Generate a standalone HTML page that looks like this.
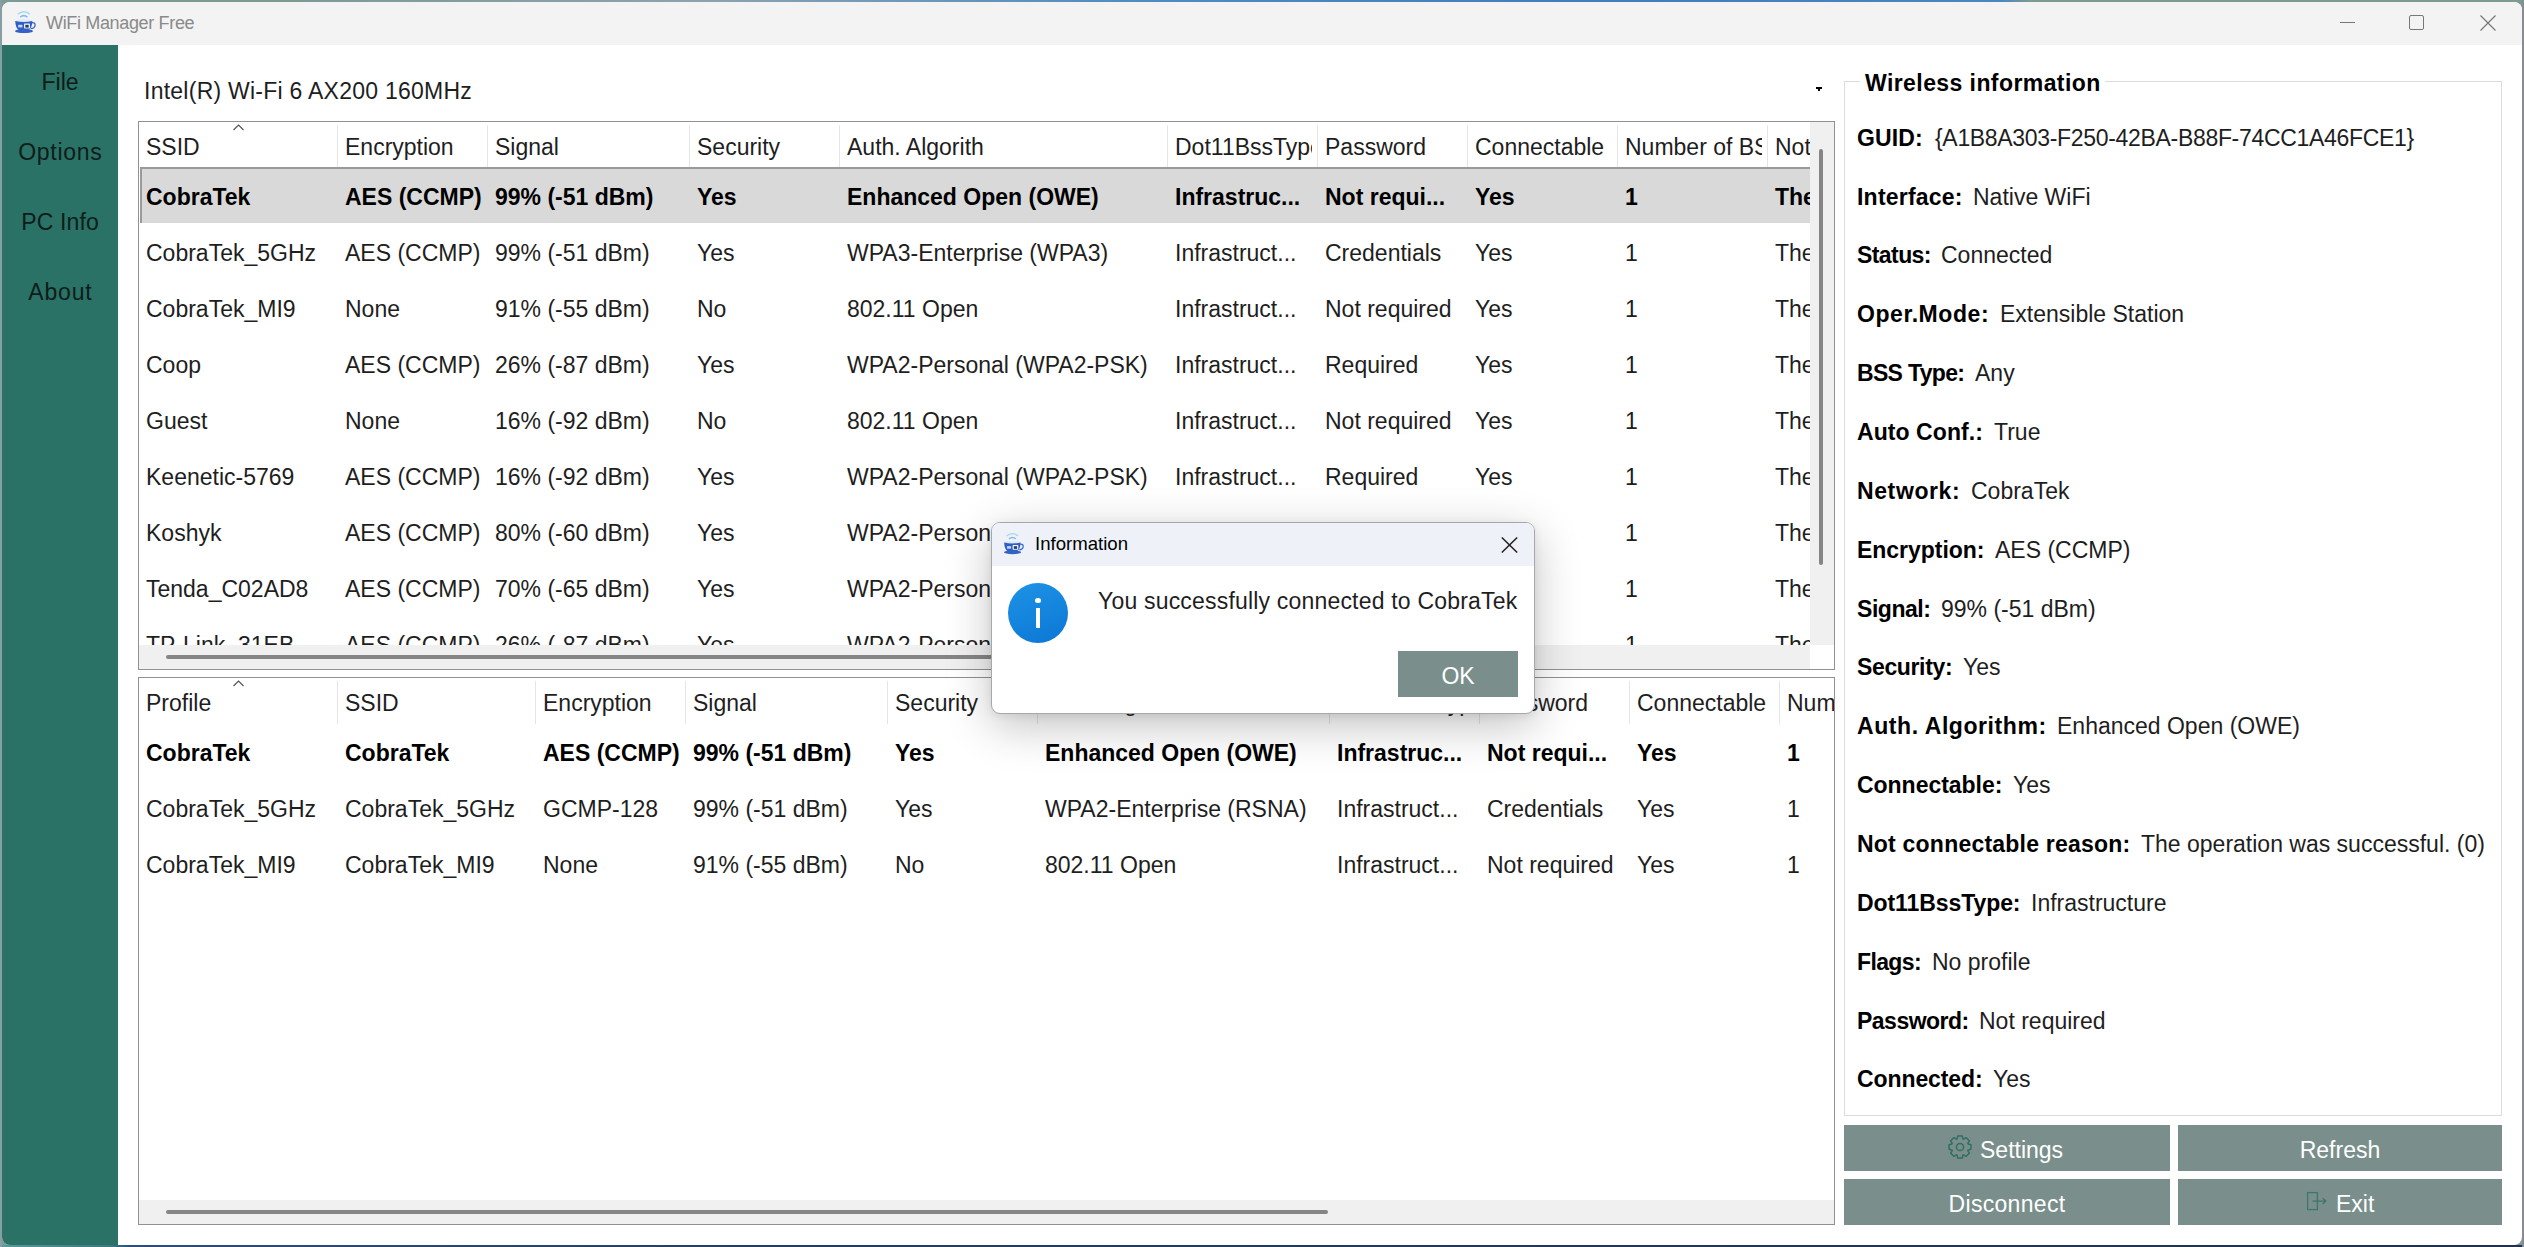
<!DOCTYPE html><html><head><meta charset="utf-8"><style>
*{margin:0;padding:0;box-sizing:border-box}
html,body{width:2524px;height:1247px;overflow:hidden;background:#7d9a95;font-family:"Liberation Sans",sans-serif;color:#000}
.abs{position:absolute}
.t{position:absolute;white-space:nowrap;font-size:23px;line-height:23px;color:#1e1e1e}
.b{font-weight:bold;color:#000}
.clip{position:absolute;overflow:hidden}
.btn{position:absolute;background:#7a8f8b;color:#fff}
</style></head><body>
<div class="abs" style="left:0;top:0;width:2524px;height:3px;background:linear-gradient(90deg,#7d9a95 0,#7d9a95 300px,#8da2b0 700px,#4f8cc0 1130px,#3f7cc0 1600px,#4a86c0 2000px,#7d9a95 2030px,#7d9a95 100%)"></div>
<div class="abs" style="left:0;top:1245px;width:2524px;height:2px;background:linear-gradient(90deg,#5a9a98 0,#3a7a80 110px,#2c4e7a 130px,#263c60 800px,#22304e 100%)"></div>
<div class="abs" style="left:2522px;top:0;width:2px;height:1247px;background:#878c92"></div>
<div class="abs" style="left:0;top:0;width:2px;height:1247px;background:#879ea3"></div>
<div class="abs" style="left:2px;top:2px;width:2520px;height:1243px;background:#fff;border-radius:8px"></div>
<div class="abs" style="left:2px;top:2px;width:2520px;height:43px;background:#f3f3f3;border-radius:8px 8px 0 0"></div>
<div class="t" style="left:46px;top:13px;font-size:18px;line-height:20px;color:#8a8a8a;letter-spacing:-0.34px">WiFi Manager Free</div>
<svg class="abs" style="left:14px;top:9px" width="24" height="26" viewBox="0 0 24 26"><path d="M3.8 5.2Q9.8 0.2 15.8 5.2" fill="none" stroke="#a8d6f2" stroke-width="1.5"/><path d="M6.2 8.2Q9.8 5.2 13.4 8.2" fill="none" stroke="#7fbde8" stroke-width="1.6"/><ellipse cx="9.8" cy="11.8" rx="8.6" ry="1.6" fill="#dfe9f7"/><path d="M1.2 12Q1.6 19.5 5 21.2L14.6 21.2Q18 19.5 18.4 12Q9.8 14 1.2 12z" fill="#2d5fc6"/><path d="M18 13.6Q21.6 13.4 21 16.8Q20.4 19.4 17 19.6" fill="none" stroke="#3a66c8" stroke-width="1.3"/><ellipse cx="10" cy="22.2" rx="9" ry="1.9" fill="#3560c4"/><rect x="10" y="14.6" width="6" height="5" rx="0.8" fill="#eef3fb"/><rect x="11.3" y="15.8" width="3.4" height="2.8" fill="#2a3c5a"/><rect x="4.2" y="15.8" width="4.2" height="2.6" fill="#c9d9f2"/></svg>
<div class="abs" style="left:2340px;top:22px;width:15px;height:1px;background:#777"></div>
<div class="abs" style="left:2409px;top:15px;width:15px;height:15px;border:1px solid #777;border-radius:2px"></div>
<svg class="abs" style="left:2480px;top:15px" width="16" height="16"><path d="M0.5 0.5L15.5 15.5M15.5 0.5L0.5 15.5" stroke="#777" stroke-width="1.2"/></svg>
<div class="abs" style="left:2px;top:45px;width:116px;height:1200px;background:#2a7166;border-bottom-left-radius:8px"></div>
<div class="t" style="left:2.0px;width:116px;text-align:center;top:71px;color:#0d1d1a;letter-spacing:0px">File</div>
<div class="t" style="left:2.35px;width:116px;text-align:center;top:141px;color:#0d1d1a;letter-spacing:0.7px">Options</div>
<div class="t" style="left:2.075px;width:116px;text-align:center;top:211px;color:#0d1d1a;letter-spacing:0.15px">PC Info</div>
<div class="t" style="left:2.4px;width:116px;text-align:center;top:281px;color:#0d1d1a;letter-spacing:0.8px">About</div>
<div class="t " style="left:144px;top:80px;letter-spacing:0.25px">Intel(R) Wi-Fi 6 AX200 160MHz</div>
<div class="abs" style="left:1816px;top:87px;width:6px;height:2px;background:#000"></div>
<div class="abs" style="left:1818px;top:87px;width:2px;height:4px;background:#000"></div>
<div class="abs" style="left:138px;top:121px;width:1697px;height:549px;border:1px solid #919191;background:#fff"></div>
<div class="clip" style="left:139px;top:122px;width:1671px;height:523px">
<div class="clip" style="left:6px;top:0;width:187px;height:45px"><div class="t" style="left:1px;top:14px">SSID</div></div>
<div class="abs" style="left:198px;top:3px;width:1px;height:43px;background:#e5e5e5"></div>
<div class="clip" style="left:205px;top:0;width:138px;height:45px"><div class="t" style="left:1px;top:14px">Encryption</div></div>
<div class="abs" style="left:348px;top:3px;width:1px;height:43px;background:#e5e5e5"></div>
<div class="clip" style="left:355px;top:0;width:190px;height:45px"><div class="t" style="left:1px;top:14px">Signal</div></div>
<div class="abs" style="left:550px;top:3px;width:1px;height:43px;background:#e5e5e5"></div>
<div class="clip" style="left:557px;top:0;width:138px;height:45px"><div class="t" style="left:1px;top:14px">Security</div></div>
<div class="abs" style="left:700px;top:3px;width:1px;height:43px;background:#e5e5e5"></div>
<div class="clip" style="left:707px;top:0;width:316px;height:45px"><div class="t" style="left:1px;top:14px">Auth. Algorith</div></div>
<div class="abs" style="left:1028px;top:3px;width:1px;height:43px;background:#e5e5e5"></div>
<div class="clip" style="left:1035px;top:0;width:138px;height:45px"><div class="t" style="left:1px;top:14px">Dot11BssType</div></div>
<div class="abs" style="left:1178px;top:3px;width:1px;height:43px;background:#e5e5e5"></div>
<div class="clip" style="left:1185px;top:0;width:138px;height:45px"><div class="t" style="left:1px;top:14px">Password</div></div>
<div class="abs" style="left:1328px;top:3px;width:1px;height:43px;background:#e5e5e5"></div>
<div class="clip" style="left:1335px;top:0;width:138px;height:45px"><div class="t" style="left:1px;top:14px">Connectable</div></div>
<div class="abs" style="left:1478px;top:3px;width:1px;height:43px;background:#e5e5e5"></div>
<div class="clip" style="left:1485px;top:0;width:138px;height:45px"><div class="t" style="left:1px;top:14px">Number of BSSIDs</div></div>
<div class="abs" style="left:1628px;top:3px;width:1px;height:43px;background:#e5e5e5"></div>
<div class="clip" style="left:1635px;top:0;width:2360px;height:45px"><div class="t" style="left:1px;top:14px">Not connectable reason</div></div>
<svg class="abs" style="left:94px;top:2px" width="11" height="7"><path d="M0.5 6L5.5 1L10.5 6" fill="none" stroke="#505050" stroke-width="1.1"/></svg>
<div class="abs" style="left:1px;top:45px;width:1671px;height:56px;background:#d9d9d9;border-left:2px solid #9a9a9a;border-top:2px solid #9a9a9a"></div>
<div class="t b" style="left:7px;top:64px">CobraTek</div>
<div class="t b" style="left:206px;top:64px">AES (CCMP)</div>
<div class="t b" style="left:356px;top:64px">99% (-51 dBm)</div>
<div class="t b" style="left:558px;top:64px">Yes</div>
<div class="t b" style="left:708px;top:64px">Enhanced Open (OWE)</div>
<div class="t b" style="left:1036px;top:64px">Infrastruc...</div>
<div class="t b" style="left:1186px;top:64px">Not requi...</div>
<div class="t b" style="left:1336px;top:64px">Yes</div>
<div class="t b" style="left:1486px;top:64px">1</div>
<div class="t b" style="left:1636px;top:64px">The</div>
<div class="t" style="left:7px;top:120px">CobraTek_5GHz</div>
<div class="t" style="left:206px;top:120px">AES (CCMP)</div>
<div class="t" style="left:356px;top:120px">99% (-51 dBm)</div>
<div class="t" style="left:558px;top:120px">Yes</div>
<div class="t" style="left:708px;top:120px">WPA3-Enterprise (WPA3)</div>
<div class="t" style="left:1036px;top:120px">Infrastruct...</div>
<div class="t" style="left:1186px;top:120px">Credentials</div>
<div class="t" style="left:1336px;top:120px">Yes</div>
<div class="t" style="left:1486px;top:120px">1</div>
<div class="t" style="left:1636px;top:120px">The</div>
<div class="t" style="left:7px;top:176px">CobraTek_MI9</div>
<div class="t" style="left:206px;top:176px">None</div>
<div class="t" style="left:356px;top:176px">91% (-55 dBm)</div>
<div class="t" style="left:558px;top:176px">No</div>
<div class="t" style="left:708px;top:176px">802.11 Open</div>
<div class="t" style="left:1036px;top:176px">Infrastruct...</div>
<div class="t" style="left:1186px;top:176px">Not required</div>
<div class="t" style="left:1336px;top:176px">Yes</div>
<div class="t" style="left:1486px;top:176px">1</div>
<div class="t" style="left:1636px;top:176px">The</div>
<div class="t" style="left:7px;top:232px">Coop</div>
<div class="t" style="left:206px;top:232px">AES (CCMP)</div>
<div class="t" style="left:356px;top:232px">26% (-87 dBm)</div>
<div class="t" style="left:558px;top:232px">Yes</div>
<div class="t" style="left:708px;top:232px">WPA2-Personal (WPA2-PSK)</div>
<div class="t" style="left:1036px;top:232px">Infrastruct...</div>
<div class="t" style="left:1186px;top:232px">Required</div>
<div class="t" style="left:1336px;top:232px">Yes</div>
<div class="t" style="left:1486px;top:232px">1</div>
<div class="t" style="left:1636px;top:232px">The</div>
<div class="t" style="left:7px;top:288px">Guest</div>
<div class="t" style="left:206px;top:288px">None</div>
<div class="t" style="left:356px;top:288px">16% (-92 dBm)</div>
<div class="t" style="left:558px;top:288px">No</div>
<div class="t" style="left:708px;top:288px">802.11 Open</div>
<div class="t" style="left:1036px;top:288px">Infrastruct...</div>
<div class="t" style="left:1186px;top:288px">Not required</div>
<div class="t" style="left:1336px;top:288px">Yes</div>
<div class="t" style="left:1486px;top:288px">1</div>
<div class="t" style="left:1636px;top:288px">The</div>
<div class="t" style="left:7px;top:344px">Keenetic-5769</div>
<div class="t" style="left:206px;top:344px">AES (CCMP)</div>
<div class="t" style="left:356px;top:344px">16% (-92 dBm)</div>
<div class="t" style="left:558px;top:344px">Yes</div>
<div class="t" style="left:708px;top:344px">WPA2-Personal (WPA2-PSK)</div>
<div class="t" style="left:1036px;top:344px">Infrastruct...</div>
<div class="t" style="left:1186px;top:344px">Required</div>
<div class="t" style="left:1336px;top:344px">Yes</div>
<div class="t" style="left:1486px;top:344px">1</div>
<div class="t" style="left:1636px;top:344px">The</div>
<div class="t" style="left:7px;top:400px">Koshyk</div>
<div class="t" style="left:206px;top:400px">AES (CCMP)</div>
<div class="t" style="left:356px;top:400px">80% (-60 dBm)</div>
<div class="t" style="left:558px;top:400px">Yes</div>
<div class="t" style="left:708px;top:400px">WPA2-Personal (WPA2-PSK)</div>
<div class="t" style="left:1036px;top:400px">Infrastruct...</div>
<div class="t" style="left:1186px;top:400px">Required</div>
<div class="t" style="left:1336px;top:400px">Yes</div>
<div class="t" style="left:1486px;top:400px">1</div>
<div class="t" style="left:1636px;top:400px">The</div>
<div class="t" style="left:7px;top:456px">Tenda_C02AD8</div>
<div class="t" style="left:206px;top:456px">AES (CCMP)</div>
<div class="t" style="left:356px;top:456px">70% (-65 dBm)</div>
<div class="t" style="left:558px;top:456px">Yes</div>
<div class="t" style="left:708px;top:456px">WPA2-Personal (WPA2-PSK)</div>
<div class="t" style="left:1036px;top:456px">Infrastruct...</div>
<div class="t" style="left:1186px;top:456px">Required</div>
<div class="t" style="left:1336px;top:456px">Yes</div>
<div class="t" style="left:1486px;top:456px">1</div>
<div class="t" style="left:1636px;top:456px">The</div>
<div class="t" style="left:7px;top:512px">TP-Link_31EB</div>
<div class="t" style="left:206px;top:512px">AES (CCMP)</div>
<div class="t" style="left:356px;top:512px">26% (-87 dBm)</div>
<div class="t" style="left:558px;top:512px">Yes</div>
<div class="t" style="left:708px;top:512px">WPA2-Personal (WPA2-PSK)</div>
<div class="t" style="left:1036px;top:512px">Infrastruct...</div>
<div class="t" style="left:1186px;top:512px">Required</div>
<div class="t" style="left:1336px;top:512px">Yes</div>
<div class="t" style="left:1486px;top:512px">1</div>
<div class="t" style="left:1636px;top:512px">The</div>
</div>
<div class="abs" style="left:139px;top:645px;width:1671px;height:24px;background:#f0f0f0"></div>
<div class="abs" style="left:166px;top:655px;width:1334px;height:4px;background:#858585;border-radius:2px"></div>
<div class="abs" style="left:1810px;top:122px;width:24px;height:523px;background:#f0f0f0"></div>
<div class="abs" style="left:1819px;top:149px;width:4px;height:416px;background:#858585;border-radius:2px"></div>
<div class="abs" style="left:138px;top:677px;width:1697px;height:548px;border:1px solid #919191;background:#fff"></div>
<div class="clip" style="left:139px;top:678px;width:1695px;height:522px">
<div class="clip" style="left:6px;top:0;width:187px;height:45px"><div class="t" style="left:1px;top:14px">Profile</div></div>
<div class="abs" style="left:198px;top:3px;width:1px;height:43px;background:#e5e5e5"></div>
<div class="clip" style="left:205px;top:0;width:186px;height:45px"><div class="t" style="left:1px;top:14px">SSID</div></div>
<div class="abs" style="left:396px;top:3px;width:1px;height:43px;background:#e5e5e5"></div>
<div class="clip" style="left:403px;top:0;width:138px;height:45px"><div class="t" style="left:1px;top:14px">Encryption</div></div>
<div class="abs" style="left:546px;top:3px;width:1px;height:43px;background:#e5e5e5"></div>
<div class="clip" style="left:553px;top:0;width:190px;height:45px"><div class="t" style="left:1px;top:14px">Signal</div></div>
<div class="abs" style="left:748px;top:3px;width:1px;height:43px;background:#e5e5e5"></div>
<div class="clip" style="left:755px;top:0;width:138px;height:45px"><div class="t" style="left:1px;top:14px">Security</div></div>
<div class="abs" style="left:898px;top:3px;width:1px;height:43px;background:#e5e5e5"></div>
<div class="clip" style="left:905px;top:0;width:280px;height:45px"><div class="t" style="left:1px;top:14px">Auth. Algorith</div></div>
<div class="abs" style="left:1190px;top:3px;width:1px;height:43px;background:#e5e5e5"></div>
<div class="clip" style="left:1197px;top:0;width:138px;height:45px"><div class="t" style="left:1px;top:14px">Dot11BssType</div></div>
<div class="abs" style="left:1340px;top:3px;width:1px;height:43px;background:#e5e5e5"></div>
<div class="clip" style="left:1347px;top:0;width:138px;height:45px"><div class="t" style="left:1px;top:14px">Password</div></div>
<div class="abs" style="left:1490px;top:3px;width:1px;height:43px;background:#e5e5e5"></div>
<div class="clip" style="left:1497px;top:0;width:138px;height:45px"><div class="t" style="left:1px;top:14px">Connectable</div></div>
<div class="abs" style="left:1640px;top:3px;width:1px;height:43px;background:#e5e5e5"></div>
<div class="clip" style="left:1647px;top:0;width:2348px;height:45px"><div class="t" style="left:1px;top:14px">Number of BSSIDs</div></div>
<svg class="abs" style="left:94px;top:2px" width="11" height="7"><path d="M0.5 6L5.5 1L10.5 6" fill="none" stroke="#505050" stroke-width="1.1"/></svg>
<div class="t b" style="left:7px;top:64px">CobraTek</div>
<div class="t b" style="left:206px;top:64px">CobraTek</div>
<div class="t b" style="left:404px;top:64px">AES (CCMP)</div>
<div class="t b" style="left:554px;top:64px">99% (-51 dBm)</div>
<div class="t b" style="left:756px;top:64px">Yes</div>
<div class="t b" style="left:906px;top:64px">Enhanced Open (OWE)</div>
<div class="t b" style="left:1198px;top:64px">Infrastruc...</div>
<div class="t b" style="left:1348px;top:64px">Not requi...</div>
<div class="t b" style="left:1498px;top:64px">Yes</div>
<div class="t b" style="left:1648px;top:64px">1</div>
<div class="t" style="left:7px;top:120px">CobraTek_5GHz</div>
<div class="t" style="left:206px;top:120px">CobraTek_5GHz</div>
<div class="t" style="left:404px;top:120px">GCMP-128</div>
<div class="t" style="left:554px;top:120px">99% (-51 dBm)</div>
<div class="t" style="left:756px;top:120px">Yes</div>
<div class="t" style="left:906px;top:120px">WPA2-Enterprise (RSNA)</div>
<div class="t" style="left:1198px;top:120px">Infrastruct...</div>
<div class="t" style="left:1348px;top:120px">Credentials</div>
<div class="t" style="left:1498px;top:120px">Yes</div>
<div class="t" style="left:1648px;top:120px">1</div>
<div class="t" style="left:7px;top:176px">CobraTek_MI9</div>
<div class="t" style="left:206px;top:176px">CobraTek_MI9</div>
<div class="t" style="left:404px;top:176px">None</div>
<div class="t" style="left:554px;top:176px">91% (-55 dBm)</div>
<div class="t" style="left:756px;top:176px">No</div>
<div class="t" style="left:906px;top:176px">802.11 Open</div>
<div class="t" style="left:1198px;top:176px">Infrastruct...</div>
<div class="t" style="left:1348px;top:176px">Not required</div>
<div class="t" style="left:1498px;top:176px">Yes</div>
<div class="t" style="left:1648px;top:176px">1</div>
</div>
<div class="abs" style="left:139px;top:1200px;width:1695px;height:24px;background:#f0f0f0"></div>
<div class="abs" style="left:166px;top:1210px;width:1162px;height:4px;background:#858585;border-radius:2px"></div>
<div class="abs" style="left:1844px;top:81px;width:658px;height:1035px;border:1px solid #dcdcdc"></div>
<div class="abs" style="left:1860px;top:70px;width:245px;height:24px;background:#fff"></div>
<div class="t b" style="left:1865px;top:72px;letter-spacing:0.42px">Wireless information</div>
<div class="t b" style="left:1857px;top:127px;letter-spacing:0.13px">GUID:</div>
<div class="t" style="left:1935px;top:127px;letter-spacing:-0.32px">{A1B8A303-F250-42BA-B88F-74CC1A46FCE1}</div>
<div class="t b" style="left:1857px;top:186px;letter-spacing:0.22px">Interface:</div>
<div class="t" style="left:1973px;top:186px">Native WiFi</div>
<div class="t b" style="left:1857px;top:244px;letter-spacing:-0.58px">Status:</div>
<div class="t" style="left:1941px;top:244px">Connected</div>
<div class="t b" style="left:1857px;top:303px;letter-spacing:0.56px">Oper.Mode:</div>
<div class="t" style="left:2000px;top:303px">Extensible Station</div>
<div class="t b" style="left:1857px;top:362px;letter-spacing:-0.67px">BSS Type:</div>
<div class="t" style="left:1975px;top:362px">Any</div>
<div class="t b" style="left:1857px;top:421px;letter-spacing:0.07px">Auto Conf.:</div>
<div class="t" style="left:1994px;top:421px">True</div>
<div class="t b" style="left:1857px;top:480px;letter-spacing:0.61px">Network:</div>
<div class="t" style="left:1971px;top:480px">CobraTek</div>
<div class="t b" style="left:1857px;top:539px;letter-spacing:-0.03px">Encryption:</div>
<div class="t" style="left:1995px;top:539px">AES (CCMP)</div>
<div class="t b" style="left:1857px;top:598px;letter-spacing:-0.45px">Signal:</div>
<div class="t" style="left:1941px;top:598px">99% (-51 dBm)</div>
<div class="t b" style="left:1857px;top:656px;letter-spacing:-0.36px">Security:</div>
<div class="t" style="left:1963px;top:656px">Yes</div>
<div class="t b" style="left:1857px;top:715px;letter-spacing:0.57px">Auth. Algorithm:</div>
<div class="t" style="left:2057px;top:715px">Enhanced Open (OWE)</div>
<div class="t b" style="left:1857px;top:774px;letter-spacing:-0.03px">Connectable:</div>
<div class="t" style="left:2013px;top:774px">Yes</div>
<div class="t b" style="left:1857px;top:833px;letter-spacing:0.22px">Not connectable reason:</div>
<div class="t" style="left:2141px;top:833px">The operation was successful. (0)</div>
<div class="t b" style="left:1857px;top:892px;letter-spacing:-0.08px">Dot11BssType:</div>
<div class="t" style="left:2031px;top:892px">Infrastructure</div>
<div class="t b" style="left:1857px;top:951px;letter-spacing:-0.62px">Flags:</div>
<div class="t" style="left:1932px;top:951px">No profile</div>
<div class="t b" style="left:1857px;top:1010px;letter-spacing:-0.51px">Password:</div>
<div class="t" style="left:1979px;top:1010px">Not required</div>
<div class="t b" style="left:1857px;top:1068px;letter-spacing:-0.09px">Connected:</div>
<div class="t" style="left:1993px;top:1068px">Yes</div>
<div class="btn" style="left:1844px;top:1125px;width:326px;height:46px"></div>
<div class="t" style="left:1980px;top:1139px;color:#fff;letter-spacing:0px">Settings</div>
<div class="btn" style="left:2178px;top:1125px;width:324px;height:46px"></div>
<div class="t" style="left:2178px;width:324px;text-align:center;top:1139px;color:#fff;letter-spacing:0px">Refresh</div>
<div class="btn" style="left:1844px;top:1179px;width:326px;height:46px"></div>
<div class="t" style="left:1844px;width:326px;text-align:center;top:1193px;color:#fff;letter-spacing:0.3px">Disconnect</div>
<div class="btn" style="left:2178px;top:1179px;width:324px;height:46px"></div>
<div class="t" style="left:2336px;top:1193px;color:#fff;letter-spacing:0px">Exit</div>
<svg class="abs" style="left:1948px;top:1135px" width="24" height="24" viewBox="0 0 24 24"><path d="M20.05 8.97 L22.98 9.77 L22.98 14.23 L20.05 15.03 L19.83 15.55 L21.34 18.19 L18.19 21.34 L15.55 19.83 L15.03 20.05 L14.23 22.98 L9.77 22.98 L8.97 20.05 L8.45 19.83 L5.81 21.34 L2.66 18.19 L4.17 15.55 L3.95 15.03 L1.02 14.23 L1.02 9.77 L3.95 8.97 L4.17 8.45 L2.66 5.81 L5.81 2.66 L8.45 4.17 L8.97 3.95 L9.77 1.02 L14.23 1.02 L15.03 3.95 L15.55 4.17 L18.19 2.66 L21.34 5.81 L19.83 8.45 Z" fill="none" stroke="#2e7062" stroke-width="1.5" stroke-linejoin="round"/><circle cx="12" cy="12" r="3.6" fill="none" stroke="#2e7062" stroke-width="1.5"/></svg>
<svg class="abs" style="left:2306px;top:1191px" width="22" height="20" viewBox="0 0 22 20"><rect x="1.6" y="1.6" width="9.8" height="17" fill="none" stroke="#3b776c" stroke-width="1.3"/><path d="M6.5 10.1h13M16.8 7.2l3 2.9-3 2.9" fill="none" stroke="#3b776c" stroke-width="1.3"/></svg>
<div class="abs" style="left:991px;top:522px;width:544px;height:192px;background:#fff;border:1px solid #a8a8a8;border-radius:9px;box-shadow:0 12px 46px rgba(0,0,0,0.24),0 2px 8px rgba(0,0,0,0.08);overflow:hidden"><div class="abs" style="left:0;top:0;width:542px;height:43px;background:linear-gradient(#eef1f8,#eef2f8)"></div></div>
<div class="t" style="left:1035px;top:534px;font-size:18.6px;line-height:20px;color:#000">Information</div>
<svg class="abs" style="left:1003px;top:531px" width="23" height="25" viewBox="0 0 24 26"><path d="M3.8 5.2Q9.8 0.2 15.8 5.2" fill="none" stroke="#a8d6f2" stroke-width="1.5"/><path d="M6.2 8.2Q9.8 5.2 13.4 8.2" fill="none" stroke="#7fbde8" stroke-width="1.6"/><ellipse cx="9.8" cy="11.8" rx="8.6" ry="1.6" fill="#dfe9f7"/><path d="M1.2 12Q1.6 19.5 5 21.2L14.6 21.2Q18 19.5 18.4 12Q9.8 14 1.2 12z" fill="#2d5fc6"/><path d="M18 13.6Q21.6 13.4 21 16.8Q20.4 19.4 17 19.6" fill="none" stroke="#3a66c8" stroke-width="1.3"/><ellipse cx="10" cy="22.2" rx="9" ry="1.9" fill="#3560c4"/><rect x="10" y="14.6" width="6" height="5" rx="0.8" fill="#eef3fb"/><rect x="11.3" y="15.8" width="3.4" height="2.8" fill="#2a3c5a"/><rect x="4.2" y="15.8" width="4.2" height="2.6" fill="#c9d9f2"/></svg>
<svg class="abs" style="left:1501px;top:537px" width="17" height="16"><path d="M0.8 0.5L16.2 15.5M16.2 0.5L0.8 15.5" stroke="#222" stroke-width="1.5"/></svg>
<div class="abs" style="left:1008px;top:583px;width:60px;height:60px;border-radius:50%;background:linear-gradient(160deg,#1d93e6,#0c77d5)"></div>
<div class="abs" style="left:1035.7px;top:608px;width:4.6px;height:20px;background:#fff"></div>
<div class="abs" style="left:1035.2px;top:597.5px;width:5.5px;height:5.5px;border-radius:50%;background:#fff"></div>
<div class="t" style="left:1098px;top:590px;letter-spacing:0.19px">You successfully connected to CobraTek</div>
<div class="abs" style="left:1398px;top:651px;width:120px;height:46px;background:#7a8f8b"></div>
<div class="t" style="left:1398px;width:120px;text-align:center;top:665px;color:#fff">OK</div>
</body></html>
